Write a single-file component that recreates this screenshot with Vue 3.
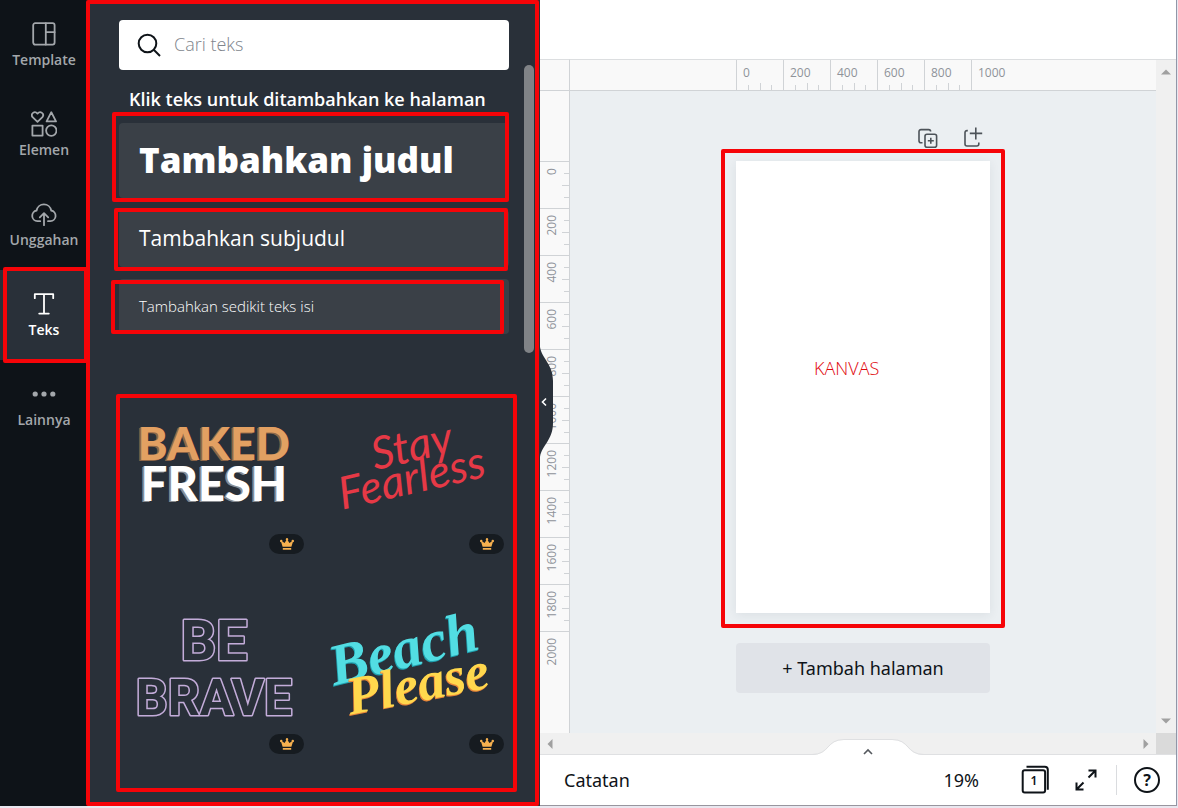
<script setup>
import { ref } from 'vue'

const search = ref('')
const active = ref('Teks')
const rail = ['Template', 'Elemen', 'Unggahan', 'Teks', 'Lainnya']
const xLabels = [0, 200, 400, 600, 800, 1000]
const yLabels = [0, 200, 400, 600, 800, 1000, 1200, 1400, 1600, 1800, 2000]
const tiles = ['baked', 'stay', 'brave', 'beach']
</script>

<template>
  <div class="app">
    <nav class="rail">
      <button
        v-for="item in rail"
        :key="item"
        type="button"
        class="rail-item"
        :class="{ active: active === item }"
        @click="active = item"
      >
        <svg v-if="item === 'Template'" class="icon" viewBox="0 0 24 24">
          <rect x="1.2" y="1.2" width="21.4" height="21.4" rx="2" />
          <path d="M13.8 1.2v21.4M13.8 10.2h8.8" />
        </svg>
        <svg v-else-if="item === 'Elemen'" class="icon big" viewBox="0 0 26 26">
          <path d="M6.500 10.800 1.600 6.200C-.9 2.800 3.600-.8 6.500 2.600 9.400-.8 13.900 2.800 11.400 6.200Z" />
          <path d="M20.300 1.200 25 10.400H15.600Z" />
          <rect x="1.400" y="14.600" width="10.200" height="10" />
          <circle cx="20.300" cy="19.600" r="5.200" />
        </svg>
        <svg v-else-if="item === 'Unggahan'" class="icon big" viewBox="0 0 26 26">
          <path d="M9.200 20.200H6.400a5.400 5.400 0 0 1-.8-10.700 7.400 7.400 0 0 1 14.600 0 5.400 5.400 0 0 1-.8 10.700H17" />
          <path d="M13 24.200V12.600M8.800 16.400 13 12.200l4.200 4.200" />
        </svg>
        <svg v-else-if="item === 'Teks'" class="icon" viewBox="0 0 24 24">
          <path d="M2.800 6.200V2.200h18.400v4M12 2.200v19.400M7.200 21.600h9.600" />
        </svg>
        <svg v-else class="icon dots" viewBox="0 0 24 24">
          <circle cx="3.200" cy="12" r="2.600" /><circle cx="12" cy="12" r="2.600" /><circle cx="20.800" cy="12" r="2.600" />
        </svg>
        <span>{{ item }}</span>
        <i v-if="item === 'Teks'" class="mark mark-tab"></i>
      </button>
    </nav>

    <aside class="panel">
      <label class="search">
        <svg viewBox="0 0 24 24" aria-hidden="true">
          <circle cx="10.500" cy="10.500" r="8.800" /><path d="m17 17 6 6" />
        </svg>
        <input v-model="search" type="text" placeholder="Cari teks" aria-label="Cari teks" />
      </label>
      <h2>Klik teks untuk ditambahkan ke halaman</h2>
      <div class="adders">
        <button type="button" class="add title">Tambahkan judul<i class="mark mark-title"></i></button>
        <button type="button" class="add subtitle">Tambahkan subjudul<i class="mark mark-subtitle"></i></button>
        <button type="button" class="add body">Tambahkan sedikit teks isi<i class="mark mark-body"></i></button>
      </div>
      <div class="tiles">
        <button v-for="tile in tiles" :key="tile" type="button" class="tile">
          <svg class="art" viewBox="0 0 190 190">
            <g v-if="tile === 'baked'" class="baked" text-anchor="middle">
              <text class="orange" x="95" y="91">BAKED</text>
              <text class="white" x="95" y="132">FRESH</text>
            </g>
            <g v-else-if="tile === 'stay'" class="stay" text-anchor="middle">
              <text x="96" y="92" transform="rotate(-13 96 92)">Stay</text>
              <text x="96" y="124" transform="rotate(-13 96 124)">Fearless</text>
            </g>
            <g v-else-if="tile === 'brave'" class="brave" text-anchor="middle">
              <text class="be" x="95" y="91">BE</text>
              <text x="95" y="146">BRAVE</text>
            </g>
            <g v-else class="beach" text-anchor="middle">
              <text class="cyan" x="89" y="98" transform="rotate(-14 89 98)">Beach</text>
              <text class="yellow" x="102" y="132" transform="rotate(-11 102 132)">Please</text>
            </g>
          </svg>
          <span class="badge">
            <svg viewBox="0 0 14 12"><path d="M2.600 8.800 1.200 4.200A1.200 1.200 0 1 1 2.300 3.500L4.600 5 6.300 2.200A1.200 1.200 0 1 1 7.700 2.200L9.400 5 11.700 3.500A1.200 1.200 0 1 1 12.800 4.200L11.400 8.800ZM2.800 10h8.400v1.800H2.800Z" /></svg>
          </span>
        </button>
        <i class="mark mark-tiles"></i>
      </div>
      <div class="thumb"></div>
      <i class="mark mark-panel"></i>
      <button type="button" class="collapse" aria-label="Tutup panel">
        <svg viewBox="0 0 14 110">
          <path class="shape" d="M0 0C2 12 13 17 13 34V76C13 93 2 98 0 110Z" />
          <path class="chev" d="M6 51.500 2.500 55l3.500 3.500" />
        </svg>
      </button>
    </aside>

    <main class="editor">
      <header class="topbar"></header>
      <div class="stage">
        <div class="corner"></div>
        <div class="ruler-x">
          <div v-for="n in xLabels" :key="n" class="cell-x">
            <span>{{ n }}</span>
            <svg v-if="n < 1000" viewBox="0 0 46 8"><path d="M11.500 3v5M23.500 1v7M34.500 3v5" /></svg>
          </div>
        </div>
        <div class="ruler-y">
          <div v-for="n in yLabels" :key="n" class="cell-y">
            <span>{{ n }}</span>
            <svg v-if="n < 2000" viewBox="0 0 8 46"><path d="M3 11.500h5M1 23.500h7M3 35.500h5" /></svg>
          </div>
        </div>
        <section class="work">
          <div class="page-tools">
            <button type="button" aria-label="Duplikat halaman">
              <svg viewBox="0 0 24 24"><path d="M6.500 16.800H5a2 2 0 0 1-2-2V5.600a2 2 0 0 1 2-2h7.600a2 2 0 0 1 2 2" /><rect x="9" y="8.200" width="11.600" height="13" rx="2" /><path d="M14.800 11.800v6M11.800 14.800h6" /></svg>
            </button>
            <button type="button" aria-label="Tambah halaman baru">
              <svg viewBox="0 0 24 24"><path d="M6.800 4.600H6a2 2 0 0 0-2 2V18a2 2 0 0 0 2 2h9.800a2 2 0 0 0 2-2v-1.600M14.800 1.400v12M8.800 7.400h12.400" /></svg>
            </button>
          </div>
          <div class="canvas">
            <span class="caption">KANVAS</span>
            <i class="mark mark-canvas"></i>
          </div>
          <button type="button" class="add-page">+ Tambah halaman</button>
        </section>
        <div class="scroll-y">
          <svg viewBox="0 0 10 6"><path d="M0 5.500 5 .5l5 5Z" /></svg>
          <svg viewBox="0 0 10 6"><path d="M0 .5h10l-5 5Z" /></svg>
        </div>
        <div class="scroll-x">
          <svg viewBox="0 0 6 10"><path d="M5.500 0v10L.5 5Z" /></svg>
          <svg viewBox="0 0 6 10"><path d="M.5 0v10l5-5Z" /></svg>
        </div>
        <div class="scroll-corner"></div>
      </div>
      <footer class="footer">
        <button type="button" class="notch" aria-label="Buka panel halaman">
          <svg viewBox="0 0 112 17">
            <path class="fill" d="M0 16C18 16 14 1 32 1H80C98 1 94 16 112 16V17H0Z" />
            <path class="edge" d="M0 15.500C18 15.500 14 .5 32 .5H80C98 .5 94 15.500 112 15.500" />
            <path class="chev" d="m52 15 4-4 4 4" />
          </svg>
        </button>
        <button type="button" class="notes">Catatan</button>
        <button type="button" class="zoom">19%</button>
        <button type="button" class="pages" aria-label="Kelola halaman">
          <svg viewBox="0 0 30 30"><path d="M5.500 1.800h18.300a3 3 0 0 1 3 3v20" /><rect x="1.700" y="5.200" width="22.400" height="22.400" rx="2" /></svg>
          <b>1</b>
        </button>
        <button type="button" class="expand" aria-label="Layar penuh">
          <svg viewBox="0 0 24 24"><path d="M14.500 2.500h7v7M21.500 2.500l-7 7M9.500 21.500h-7v-7M2.500 21.500l7-7" /></svg>
        </button>
        <span class="divider"></span>
        <button type="button" class="help" aria-label="Bantuan">?</button>
      </footer>
    </main>
  </div>
</template>

<style>
body {
  background: #e9e7ef;
}
</style>

<style scoped>
* {
  box-sizing: border-box;
}
.app {
  display: flex;
  height: 100vh;
  min-height: 800px;
  padding: 0 1px 2px 0;
  overflow: hidden;
  font-family: 'Open Sans', 'Noto Sans', sans-serif;
  color: #0e1318;
}
button {
  margin: 0;
  padding: 0;
  border: 0;
  background: none;
  color: inherit;
  font: inherit;
  cursor: pointer;
}
svg {
  display: block;
  fill: none;
}
.mark {
  position: absolute;
  z-index: 3;
  border: 4px solid #f60408;
  border-radius: 2px;
  pointer-events: none;
}

.rail {
  flex: 0 0 88px;
  background: #0e1318;
}
.rail-item {
  position: relative;
  display: flex;
  flex-direction: column;
  align-items: center;
  gap: 4px;
  width: 100%;
  height: 90px;
  padding-top: 22px;
  color: #a3a7ab;
  font-size: 14px;
  font-weight: 600;
  line-height: 20px;
}
.rail-item.active {
  background: #293039;
  color: #fff;
}
.icon {
  width: 24px;
  height: 24px;
  stroke: currentColor;
  stroke-width: 1.8;
  stroke-linejoin: round;
  stroke-linecap: round;
}
.icon.big {
  width: 26px;
  height: 26px;
  margin: -1px;
}
.icon.dots {
  fill: currentColor;
  stroke: none;
}
.mark-tab {
  inset: -3px 0 -3px 3px;
}

.panel {
  position: relative;
  flex: 0 0 452px;
  padding: 20px 31px 0;
  background: #293039;
  color: #fff;
}
.search {
  display: flex;
  align-items: center;
  gap: 13px;
  height: 50px;
  padding: 0 18px;
  border-radius: 4px;
  background: #fff;
}
.search svg {
  width: 24px;
  height: 24px;
  stroke: #0e1318;
  stroke-width: 2;
}
.search input {
  flex: 1;
  min-width: 0;
  padding: 0 0 2px;
  border: 0;
  outline: 0;
  background: none;
  color: #0e1318;
  font: 300 18px/24px 'Open Sans', 'Noto Sans', sans-serif;
}
.search input::placeholder {
  color: #80858c;
  opacity: 1;
}
h2 {
  margin: 17px 8px 12px 10px;
  font-size: 18px;
  font-weight: 600;
  line-height: 24px;
  white-space: nowrap;
}
.adders {
  display: grid;
  gap: 12px;
}
.add {
  position: relative;
  padding: 0 20px 2px;
  border-radius: 4px;
  background: #3a4047;
  text-align: left;
  white-space: nowrap;
}
.title {
  height: 75px;
  font-size: 35px;
  font-weight: 800;
}
.subtitle {
  height: 57px;
  font-size: 21px;
}
.body {
  height: 55px;
  font-size: 15px;
  font-weight: 300;
}
.mark-title {
  inset: -11px 0 -4px -7px;
}
.mark-subtitle {
  inset: -2px 1px -4px -5px;
}
.mark-body {
  inset: 1px 5px 0 -8px;
}
.tiles {
  position: relative;
  display: grid;
  grid-template-columns: 1fr 1fr;
  gap: 10px;
  margin-top: 35px;
}
.mark-tiles {
  inset: 25px -8px -33px -3px;
}
.tile {
  position: relative;
  aspect-ratio: 1;
}
.art {
  width: 100%;
  height: 100%;
}
.badge {
  position: absolute;
  right: 5px;
  bottom: 5px;
  display: grid;
  place-items: center;
  width: 35px;
  height: 20px;
  border-radius: 10px;
  background: #161b20;
}
.badge svg {
  width: 14px;
  height: 12px;
  fill: #f6b04f;
}
.baked {
  font: 900 47px Lato, sans-serif;
}
.orange {
  fill: #e2a062;
  font-size: 45px;
  text-shadow: -1px 0 #8d6547, -2px 1px #8d6547;
}
.white {
  fill: #fff;
  text-shadow: -1px 0 #8a8d92, -2px 1px #8a8d92;
}
.stay {
  fill: #e63946;
  font: italic 400 45px Lato, sans-serif;
}
.brave {
  fill: #293039;
  stroke: #c3acd9;
  stroke-width: 3;
  stroke-linejoin: round;
  paint-order: stroke;
  font: 700 50px Roboto, sans-serif;
}
.be {
  font-size: 56px;
}
.beach {
  font: italic 700 54px 'Liberation Serif', serif;
}
.cyan {
  fill: #52dde3;
  font-size: 58px;
  text-shadow: -1px 1px #1f9fae;
}
.yellow {
  fill: #ffd84d;
  text-shadow: -1px 1px #e8853a;
}
.thumb {
  position: absolute;
  top: 65px;
  right: 6px;
  width: 10px;
  height: 288px;
  border-radius: 5px;
  background: #808387;
}
.mark-panel {
  inset: 0 1px 0 -2px;
}
.collapse {
  position: absolute;
  z-index: 2;
  top: 347px;
  left: 100%;
  width: 14px;
  height: 110px;
}
.collapse .shape {
  fill: #293039;
}
.collapse .chev {
  stroke: #fff;
  stroke-width: 1.6;
}

.editor {
  flex: 1;
  min-width: 0;
  display: flex;
  flex-direction: column;
  border-right: 1px solid #9196a8;
  border-bottom: 1px solid #98959e;
  background: #fff;
}
.topbar {
  height: 59px;
}
.stage {
  flex: 1;
  display: grid;
  grid-template-columns: 30px 1fr 20px;
  grid-template-rows: 32px 1fr 21px;
  min-height: 0;
  background: #ebeff2;
}
.corner,
.ruler-x {
  border-top: 1px solid #dcdee0;
  border-bottom: 1px solid #d0d3d6;
  background: #f9f9f9;
}
.corner,
.ruler-y {
  border-right: 1px solid #d0d3d6;
}
.ruler-x {
  display: flex;
  padding-left: calc(50% - 127px);
  overflow: hidden;
}
.cell-x {
  flex: 0 0 47px;
  display: flex;
  flex-direction: column;
  justify-content: space-between;
  border-left: 1px solid #d0d3d6;
}
.cell-x span,
.cell-y span {
  color: #8f9399;
  font-size: 12px;
  line-height: 16px;
}
.cell-x span {
  padding: 5px 0 0 6px;
}
.cell-x svg {
  width: 46px;
  height: 8px;
  stroke: #d0d3d6;
}
.ruler-y {
  grid-row: 2;
  padding-top: 70px;
  overflow: hidden;
  background: #f9f9f9;
}
.cell-y {
  display: flex;
  justify-content: space-between;
  align-items: flex-start;
  height: 47px;
  border-top: 1px solid #d0d3d6;
}
.cell-y span {
  margin: 6px 0 0 4px;
  writing-mode: vertical-rl;
  transform: rotate(180deg);
}
.cell-y svg {
  width: 8px;
  height: 46px;
  stroke: #d0d3d6;
}
.work {
  grid-row: 2;
  grid-column: 2;
  display: flex;
  flex-direction: column;
  align-items: center;
  padding-top: 35px;
}
.page-tools {
  display: flex;
  justify-content: flex-end;
  gap: 21px;
  width: 254px;
  padding-right: 5px;
}
.page-tools svg {
  width: 24px;
  height: 24px;
  stroke: #4d5359;
  stroke-width: 1.6;
}
.canvas {
  position: relative;
  width: 254px;
  height: 452px;
  margin-top: 11px;
  background: #fff;
  box-shadow: 0 2px 10px rgba(40, 50, 70, 0.08);
}
.caption {
  position: absolute;
  top: 195px;
  left: 78px;
  color: #e0060c;
  font-size: 18px;
  font-weight: 300;
  line-height: 24px;
}
.mark-canvas {
  inset: -12px -15px -15px;
}
.add-page {
  width: 254px;
  height: 50px;
  margin-top: 30px;
  border-radius: 4px;
  background: #e0e3e8;
  font-family: 'Noto Sans', sans-serif;
  font-size: 18px;
}
.scroll-y {
  grid-row: 1 / 3;
  grid-column: 3;
  display: flex;
  flex-direction: column;
  justify-content: space-between;
  align-items: center;
  padding: 9px 0 9px;
  border-top: 1px solid #dcdee0;
  background: #f0f0f0;
}
.scroll-y svg {
  width: 10px;
  height: 6px;
  fill: #a0a0a0;
}
.scroll-x {
  grid-row: 3;
  grid-column: 1 / 3;
  display: flex;
  justify-content: space-between;
  align-items: center;
  padding: 0 7px;
  background: #f0f0f0;
}
.scroll-x svg {
  width: 6px;
  height: 10px;
  fill: #a0a0a0;
}
.scroll-corner {
  grid-row: 3;
  grid-column: 3;
  background: #dadada;
}
.footer {
  position: relative;
  display: flex;
  align-items: center;
  height: 51px;
  padding: 0 16px 0 24px;
  border-top: 1px solid #dfe0e2;
  background: #fff;
  font-family: 'Noto Sans', sans-serif;
  font-size: 18px;
}
.notch {
  position: absolute;
  bottom: 100%;
  left: calc(50% + 10px);
  width: 112px;
  height: 16px;
  margin-left: -56px;
}
.notch svg {
  width: 112px;
  height: 17px;
}
.notch .fill {
  fill: #fff;
}
.notch .edge {
  stroke: #dfe0e2;
}
.notch .chev {
  stroke: #55595e;
  stroke-width: 1.6;
}
.notes {
  margin-right: auto;
}
.pages {
  position: relative;
  width: 30px;
  height: 30px;
  margin-left: 42px;
}
.pages svg,
.expand svg {
  width: 100%;
  height: 100%;
  stroke: #0e1318;
  stroke-width: 2;
}
.pages b {
  position: absolute;
  top: 8px;
  left: 2px;
  width: 22px;
  font-size: 12px;
  font-weight: 600;
  line-height: 16px;
  text-align: center;
}
.expand {
  width: 24px;
  height: 24px;
  margin-left: 23px;
}
.divider {
  width: 1px;
  height: 30px;
  margin: 0 17px 0 18px;
  background: #dadcdf;
}
.help {
  width: 26px;
  height: 26px;
  border: 2px solid #0e1318;
  border-radius: 50%;
  font-weight: 700;
  font-size: 16px;
  line-height: 22px;
}
</style>
